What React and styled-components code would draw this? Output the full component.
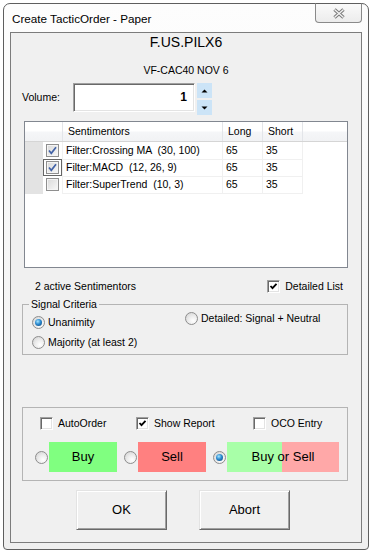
import styled, { createGlobalStyle, css } from "styled-components"

const sentimentors = [
  { name: "Filter:Crossing MA  (30, 100)", long: 65, short: 35, on: true },
  { name: "Filter:MACD  (12, 26, 9)", long: 65, short: 35, on: true, focus: true },
  { name: "Filter:SuperTrend  (10, 3)", long: 65, short: 35, on: false },
]

const ThemedCheck = ({ checked }) => (
  <ThemedBox>
    {checked && (
      <svg width="11" height="11" viewBox="0 0 11 11">
        <path d="M2 5.5 L4.3 8.3 L9 2.3" fill="none" stroke="#4262a6" strokeWidth="1.7" />
      </svg>
    )}
  </ThemedBox>
)

const ClassicCheck = ({ checked }) => (
  <ClassicBox>
    {checked && (
      <svg width="9" height="9" viewBox="0 0 9 9">
        <path d="M1.5 4 L3.5 6.2 L7.5 1.8" fill="none" stroke="#000" strokeWidth="1.8" />
      </svg>
    )}
  </ClassicBox>
)

const App = () => (
  <>
    <GlobalStyle />
    <Window>
      <TitleBar>
        <Title>Create TacticOrder - Paper</Title>
        <CloseButton>
          <svg width="14" height="11" viewBox="0 0 14 11">
            <path d="M2.5 1.5 L11.5 9.5 M11.5 1.5 L2.5 9.5" stroke="#7b7b7b" strokeWidth="3.4" />
            <path d="M2.5 1.5 L11.5 9.5 M11.5 1.5 L2.5 9.5" stroke="#f4f4f4" strokeWidth="1.3" />
          </svg>
        </CloseButton>
      </TitleBar>
      <Client>
        <Symbol>F.US.PILX6</Symbol>
        <Contract>VF-CAC40 NOV 6</Contract>

        <VolumeRow>
          <VolumeLabel>Volume:</VolumeLabel>
          <VolumeInput>1</VolumeInput>
          <Spinner>
            <SpinButton>
              <svg width="7" height="4" viewBox="0 0 7 4">
                <polygon points="0.5,3.5 3.5,0.5 6.5,3.5" fill="#000" />
              </svg>
            </SpinButton>
            <SpinButton>
              <svg width="7" height="4" viewBox="0 0 7 4">
                <polygon points="0.5,0.5 3.5,3.5 6.5,0.5" fill="#000" />
              </svg>
            </SpinButton>
          </Spinner>
        </VolumeRow>

        <ListView>
          <HeaderRow>
            <HeaderCell />
            <HeaderCell>Sentimentors</HeaderCell>
            <HeaderCell>Long</HeaderCell>
            <HeaderCell>Short</HeaderCell>
            <HeaderCell $last />
          </HeaderRow>
          {sentimentors.map((s) => (
            <Row key={s.name}>
              <CheckCell>
                <Gutter />
                <CheckSlot $focus={s.focus}>
                  <ThemedCheck checked={s.on} />
                </CheckSlot>
              </CheckCell>
              <Cell>{s.name}</Cell>
              <Cell>{s.long}</Cell>
              <Cell>{s.short}</Cell>
            </Row>
          ))}
        </ListView>

        <StatusRow>
          <span>2 active Sentimentors</span>
          <CheckOption>
            <ClassicCheck checked />
            Detailed List
          </CheckOption>
        </StatusRow>

        <SignalGroup>
          <Legend>Signal Criteria</Legend>
          <SignalBody>
            <SignalColumn>
              <RadioOption>
                <Radio $checked />
                Unanimity
              </RadioOption>
              <RadioOption>
                <Radio />
                Majority (at least 2)
              </RadioOption>
            </SignalColumn>
            <SignalColumn $right>
              <RadioOption>
                <Radio />
                Detailed: Signal + Neutral
              </RadioOption>
            </SignalColumn>
          </SignalBody>
        </SignalGroup>

        <OrderGroup>
          <OrderOptions>
            <CheckOption>
              <ClassicCheck />
              AutoOrder
            </CheckOption>
            <CheckOption>
              <ClassicCheck checked />
              Show Report
            </CheckOption>
            <CheckOption>
              <ClassicCheck />
              OCO Entry
            </CheckOption>
          </OrderOptions>
          <SideRow>
            <SideChoice>
              <Radio />
              <SideBlock $w={68} $bg="#80ff80">Buy</SideBlock>
            </SideChoice>
            <SideChoice>
              <Radio />
              <SideBlock $w={68} $bg="#ff8080">Sell</SideBlock>
            </SideChoice>
            <SideChoice $gap={8}>
              <Radio $checked />
              <SideBlock $w={112} $bg="linear-gradient(to right, #a8ffa8 0 55px, #ffa8a8 55px 100%)">
                Buy or Sell
              </SideBlock>
            </SideChoice>
          </SideRow>
        </OrderGroup>

        <ButtonRow>
          <DialogButton>OK</DialogButton>
          <DialogButton>Abort</DialogButton>
        </ButtonRow>
      </Client>
    </Window>
  </>
)

const GlobalStyle = createGlobalStyle`
  html, body {
    margin: 0;
    padding: 0;
    background: #fff;
  }
  body {
    font-family: "Liberation Sans", Arial, sans-serif;
    font-size: 10.5px;
    color: #000;
  }
`

const Window = styled.div`
  box-sizing: border-box;
  width: 366px;
  height: 547px;
  margin: 3px 0 0 3px;
  padding: 0 6px 6px 6px;
  border: 1px solid #5e5e5e;
  border-radius: 7px 7px 4px 4px;
  background: linear-gradient(#fdfdfd, #efefef);
  display: flex;
  flex-direction: column;
`

const TitleBar = styled.div`
  height: 28px;
  display: flex;
  justify-content: space-between;
  align-items: center;
  padding-left: 2px;
`

const Title = styled.div`
  font-size: 11.7px;
  margin-top: 1px;
`

const CloseButton = styled.div`
  align-self: flex-start;
  margin-top: -1px;
  box-sizing: border-box;
  width: 47px;
  height: 20px;
  border: 1px solid #8a8a8a;
  border-top-color: #5e5e5e;
  border-radius: 0 0 4px 4px;
  background: linear-gradient(#fafafa, #ececec);
  display: flex;
  align-items: center;
  justify-content: center;
`

const Client = styled.div`
  box-sizing: border-box;
  height: 511px;
  border: 1px solid #7c7c7c;
  background: #f0f0f0;
  display: flex;
  flex-direction: column;
`

const Symbol = styled.div`
  text-align: center;
  font-size: 14px;
  line-height: 18px;
`

const Contract = styled.div`
  margin-top: 12px;
  text-align: center;
  line-height: 14px;
`

const VolumeRow = styled.div`
  margin-top: 6px;
  height: 32px;
  padding-left: 11px;
  display: flex;
  align-items: flex-start;
`

const VolumeLabel = styled.div`
  width: 51px;
  line-height: 29px;
`

const VolumeInput = styled.div`
  box-sizing: border-box;
  width: 122px;
  height: 29px;
  padding-right: 7px;
  background: #fff;
  border: 1px solid;
  border-color: #a0a0a0 #fff #fff #a0a0a0;
  box-shadow: inset 1px 1px #696969, inset -1px -1px #e3e3e3;
  text-align: right;
  font-size: 12px;
  font-weight: bold;
  line-height: 26px;
`

const Spinner = styled.div`
  margin-left: 2px;
  display: flex;
  flex-direction: column;
  gap: 2px;
`

const SpinButton = styled.div`
  width: 15px;
  height: 15px;
  background: #cce4f7;
  display: flex;
  align-items: center;
  justify-content: center;
`

const ListView = styled.div`
  box-sizing: border-box;
  margin: 6px 13px 0 13px;
  height: 147px;
  border: 1px solid #828790;
  background: #fff;
`

const HeaderRow = styled.div`
  box-sizing: border-box;
  display: grid;
  grid-template-columns: 38px 160px 40px 40px 1fr;
  height: 20px;
  border-bottom: 1px solid #d5d5d5;
  background: linear-gradient(#ffffff 0%, #ffffff 45%, #f5f6f8 55%, #f1f2f4 100%);
`

const HeaderCell = styled.div`
  border-right: ${(p) => (p.$last ? "none" : "1px solid #e3e5e9")};
  padding-left: 5px;
  line-height: 19px;
`

const Row = styled.div`
  display: grid;
  grid-template-columns: 38px 160px 40px 40px;
  height: 17px;
`

const Cell = styled.div`
  box-sizing: border-box;
  border-right: 1px solid #f0f0f0;
  border-bottom: 1px solid #f0f0f0;
  padding-left: 3px;
  line-height: 17px;
  white-space: pre;
`

const CheckCell = styled.div`
  display: flex;
  border-right: 1px solid #f0f0f0;
`

const Gutter = styled.div`
  width: 18px;
  background: #e3e3e3;
`

const CheckSlot = styled.div`
  box-sizing: border-box;
  width: 19px;
  height: 17px;
  display: flex;
  align-items: center;
  justify-content: center;
  border: 1px solid ${(p) => (p.$focus ? "#666" : "transparent")};
`

const ThemedBox = styled.span`
  box-sizing: border-box;
  width: 13px;
  height: 13px;
  flex: none;
  border: 1px solid #8f8f8f;
  background: linear-gradient(135deg, #d9d9d9, #f8f8f8);
  box-shadow: inset 0 0 0 1px #f4f4f4;
  display: flex;
  align-items: center;
  justify-content: center;
`

const ClassicBox = styled.span`
  box-sizing: border-box;
  width: 13px;
  height: 13px;
  flex: none;
  background: #fff;
  border: 1px solid;
  border-color: #a0a0a0 #fff #fff #a0a0a0;
  box-shadow: inset 1px 1px #696969, inset -1px -1px #e3e3e3;
  display: flex;
  align-items: center;
  justify-content: center;
`

const CheckOption = styled.label`
  display: flex;
  align-items: center;
  gap: 5px;
  height: 16px;
`

const StatusRow = styled.div`
  margin-top: 9px;
  height: 18px;
  padding: 0 18px 0 24px;
  display: flex;
  align-items: center;
  justify-content: space-between;
`

const SignalGroup = styled.fieldset`
  margin: 3px 13px 0 11px;
  padding: 0;
  min-width: 0;
  border: 1px solid #b4b4b4;
`

const Legend = styled.legend`
  margin-left: 6px;
  padding: 0 2px;
  line-height: 12px;
`

const SignalBody = styled.div`
  display: flex;
  padding: 0 0 4px 9px;
`

const SignalColumn = styled.div`
  display: flex;
  flex-direction: column;
  gap: 4px;
  ${(p) =>
    p.$right
      ? css`
          padding-top: 0;
        `
      : css`
          width: 153px;
          padding-top: 4px;
        `}
`

const RadioOption = styled.label`
  display: flex;
  align-items: center;
  gap: 3px;
  height: 16px;
`

const Radio = styled.span`
  position: relative;
  box-sizing: border-box;
  width: 13px;
  height: 13px;
  flex: none;
  border-radius: 50%;
  border: 1px solid #8d8d8d;
  background: radial-gradient(circle at 65% 70%, #ffffff 0%, #ececec 45%, #cfcfcf 100%);
  ${(p) =>
    p.$checked &&
    css`
      &::after {
        content: "";
        position: absolute;
        left: 2px;
        top: 2px;
        width: 7px;
        height: 7px;
        border-radius: 50%;
        background: radial-gradient(circle at 40% 35%, #a6e6ff 0%, #2b8ad0 45%, #0b3e6f 100%);
      }
    `}
`

const OrderGroup = styled.div`
  box-sizing: border-box;
  margin: 52px 13px 0 11px;
  height: 74px;
  border: 1px solid #b4b4b4;
`

const OrderOptions = styled.div`
  display: grid;
  grid-template-columns: 96px 117px auto;
  padding: 7px 0 0 17px;
`

const SideRow = styled.div`
  margin-top: 11px;
  height: 30px;
  padding-left: 12px;
  display: flex;
  align-items: center;
`

const SideChoice = styled.div`
  display: flex;
  align-items: center;
  gap: 1px;
  margin-right: ${(p) => p.$gap ?? 7}px;
`

const SideBlock = styled.div`
  width: ${(p) => p.$w}px;
  height: 30px;
  background: ${(p) => p.$bg};
  text-align: center;
  font-size: 13px;
  line-height: 30px;
`

const ButtonRow = styled.div`
  margin-top: 9px;
  padding-left: 65px;
  display: flex;
  gap: 32px;
`

const DialogButton = styled.div`
  box-sizing: border-box;
  width: 91px;
  height: 40px;
  background: #f0f0f0;
  border: 1px solid;
  border-color: #e3e3e3 #696969 #696969 #e3e3e3;
  box-shadow: inset 1px 1px #fff, inset -1px -1px #a0a0a0;
  text-align: center;
  font-size: 13px;
  line-height: 38px;
`

export default App
